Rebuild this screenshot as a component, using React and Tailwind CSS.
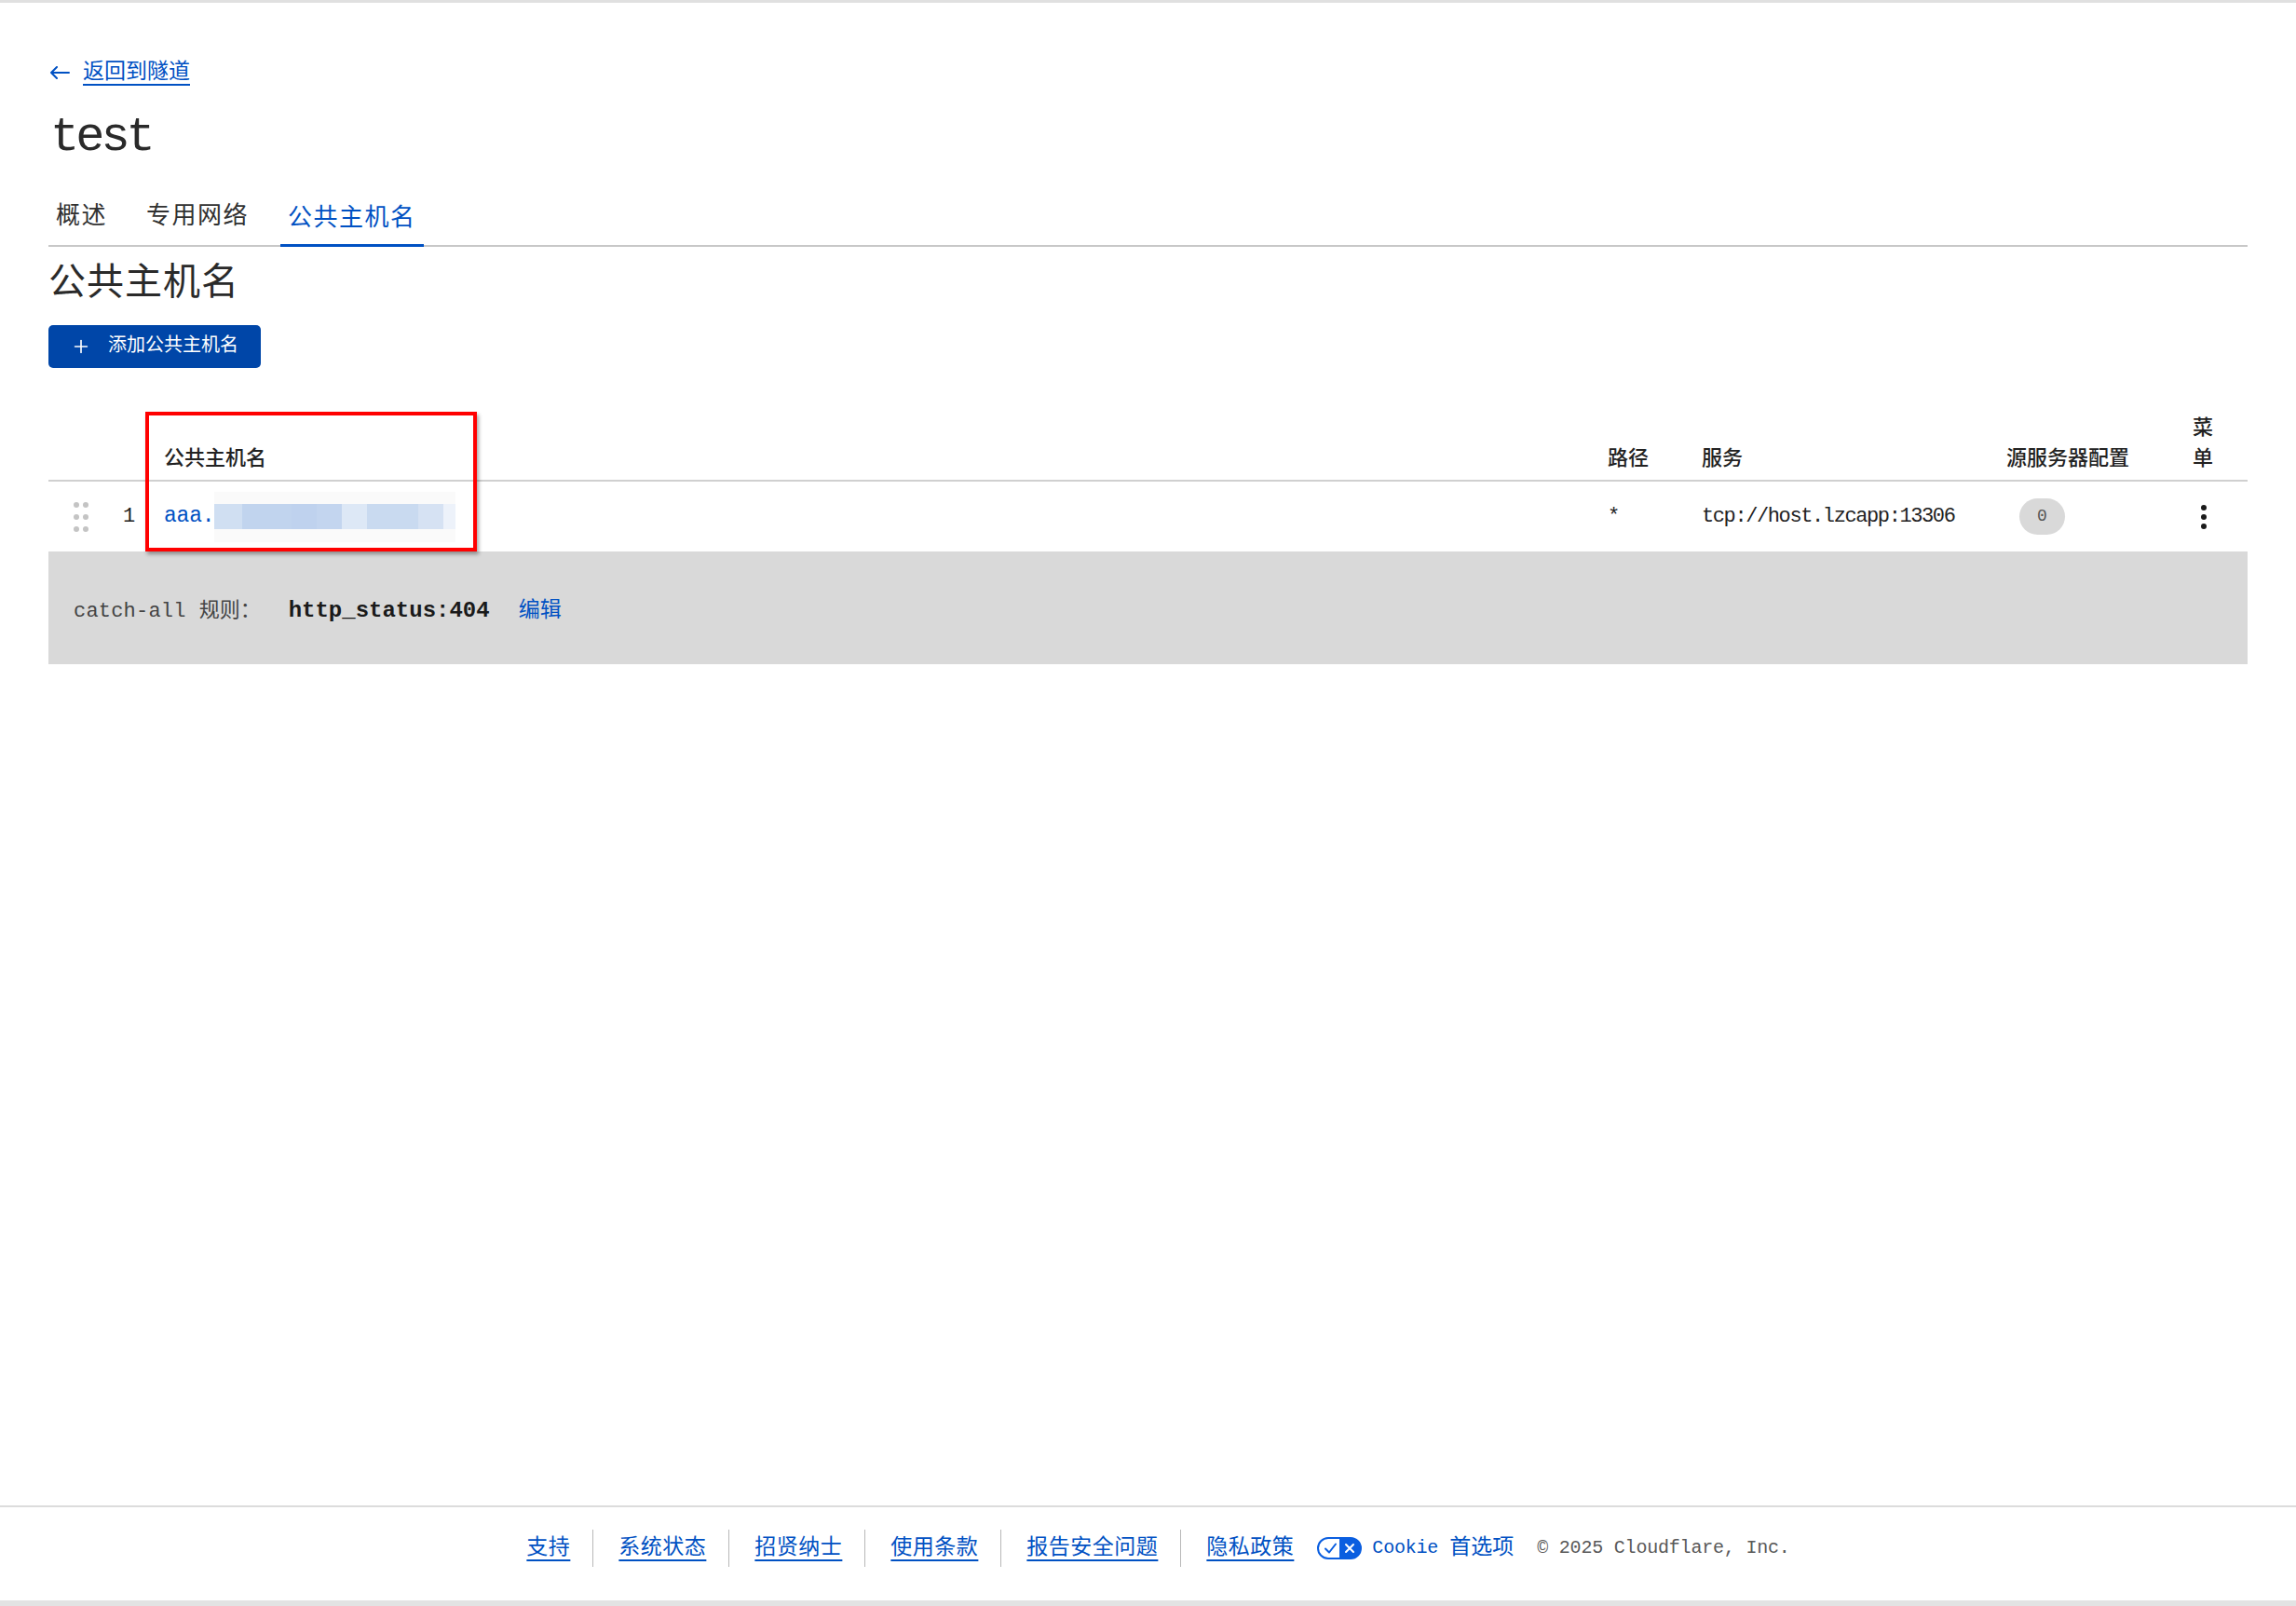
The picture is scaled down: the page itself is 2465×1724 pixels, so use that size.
import { Plus } from 'lucide-react';

const blurSegments = [
  { w: 30, c: 'bg-[#d0dff2]' },
  { w: 53, c: 'bg-[#c1d4ee]' },
  { w: 27, c: 'bg-[#bfd2ee]' },
  { w: 27, c: 'bg-[#c3d5ef]' },
  { w: 27, c: 'bg-[#dde8f6]' },
  { w: 55, c: 'bg-[#c9daf0]' },
  { w: 27, c: 'bg-[#d6e2f3]' },
  { w: 13, c: 'bg-[#edf2fa]' },
];

const footerLinks = ['支持', '系统状态', '招贤纳士', '使用条款', '报告安全问题'];

function DragHandle() {
  return (
    <div className="grid grid-cols-2 gap-x-[4px] gap-y-[7px] w-[16px]">
      {[0, 1, 2, 3, 4, 5].map((i) => (
        <span key={i} className="block w-[6px] h-[6px] rounded-full bg-[#c4c4c4]" />
      ))}
    </div>
  );
}

function Kebab() {
  return (
    <div className="flex flex-col items-center gap-[4px] w-[24px]">
      <span className="block w-[6px] h-[6px] rounded-full bg-[#1a1a1a]" />
      <span className="block w-[6px] h-[6px] rounded-full bg-[#1a1a1a]" />
      <span className="block w-[6px] h-[6px] rounded-full bg-[#1a1a1a]" />
    </div>
  );
}

function CookieToggle() {
  return (
    <svg width="48" height="24" viewBox="0 0 48 24" fill="none">
      <rect x="1" y="1" width="46" height="22" rx="11" fill="#fff" stroke="#0a5ee0" strokeWidth="2" />
      <path d="M24 1h12a11 11 0 0 1 0 22H24z" fill="#0a5ee0" />
      <path d="M9 12.5l4 4 7-9" stroke="#0a5ee0" strokeWidth="2" strokeLinecap="round" strokeLinejoin="round" />
      <path d="M31 8l8 8M39 8l-8 8" stroke="#fff" strokeWidth="2" strokeLinecap="round" />
    </svg>
  );
}

export default function App() {
  return (
    <div className="min-h-[1724px] flex flex-col bg-white text-[#313131] font-['Liberation_Mono','Noto_Sans_CJK_SC',monospace]">
      <div className="h-[3px] bg-[#e0e0e0]" />

      <main className="flex-1 px-[52px]">
        {/* back link */}
        <div className="mt-[60px] leading-[30px]">
          <a href="#" className="inline-flex items-center gap-[14px] text-[#0051c3] underline underline-offset-[6px] decoration-[1.5px]">
            <svg width="22" height="14" viewBox="0 0 22 14" fill="none" className="ml-[1px]">
              <path d="M21 7H2M8 1L2 7l6 6" stroke="#0051c3" strokeWidth="2" strokeLinecap="round" strokeLinejoin="round" />
            </svg>
            <span className="text-[23px]">返回到隧道</span>
          </a>
        </div>

        <h1 className="mt-[22px] text-[52px] leading-[60px] tracking-[-4px] text-[#2a2a2a] pl-[2px]">test</h1>

        {/* tabs */}
        <div className="mt-[37px] flex items-end gap-[26px] border-b-2 border-[#c8c8c8] text-[26px] leading-[36px] tracking-[1.5px]">
          <div className="px-[8px] pb-[12px] text-[#313131]">概述</div>
          <div className="px-[8px] pb-[12px] text-[#313131]">专用网络</div>
          <div className="px-[8px] pb-[9px] -mb-[2px] border-b-[3px] border-[#0051c3] text-[#0051c3]">公共主机名</div>
        </div>

        <h2 className="mt-[17px] text-[40px] leading-[48px] tracking-[1px] text-[#2a2a2a]">公共主机名</h2>

        <button className="mt-[19px] h-[46px] w-[228px] flex items-center gap-[18px] pl-[24px] rounded-[5px] bg-[#0046a8] text-white">
          <Plus size={22} strokeWidth={1.8} />
          <span className="text-[20px]">添加公共主机名</span>
        </button>

        {/* table */}
        <div className="relative mt-[49px]">
          <div className="grid grid-cols-[64px_48px_1fr_101px_327px_200px_71px] items-end border-b-2 border-[#d0d0d0] text-[22px] leading-[33px] font-medium text-[#222]">
            <div />
            <div />
            <div className="pl-[12px] pb-[5px]">公共主机名</div>
            <div className="pl-[12px] pb-[5px]">路径</div>
            <div className="pl-[12px] pb-[5px]">服务</div>
            <div className="pl-[12px] pb-[5px]">源服务器配置</div>
            <div className="pl-[12px] pb-[5px] w-[36px] break-all">菜单</div>
          </div>

          <div className="grid grid-cols-[64px_48px_1fr_101px_327px_200px_71px] items-center h-[75px] text-[22px]">
            <div className="pl-[27px]">
              <DragHandle />
            </div>
            <div className="pl-[16px] text-[#222]">1</div>
            <div className="pl-[12px] flex items-center">
              <span className="text-[23px] text-[#0051c3] tracking-[-0.2px]">aaa.</span>
              <div className="h-[54px] w-[259px] bg-[#fafafa] flex items-center">
                {blurSegments.map((s, i) => (
                  <span key={i} className={`block h-[27px] ${s.c}`} style={{ width: s.w }} />
                ))}
              </div>
            </div>
            <div className="pl-[12px] text-[#222]">*</div>
            <div className="pl-[12px] text-[#222] tracking-[-1.4px] whitespace-nowrap">tcp://host.lzcapp:13306</div>
            <div className="pl-[26px]">
              <span className="flex items-center justify-center w-[49px] h-[39px] rounded-full bg-[#d9d9d9] text-[18px] text-[#555]">0</span>
            </div>
            <div className="pl-[12px]">
              <Kebab />
            </div>
          </div>

          <div className="h-[121px] bg-[#d9d9d9] flex items-center pl-[27px] pt-[7px]">
            <span className="text-[22px] text-[#444] tracking-[0.2px]">catch-all</span>
            <span className="ml-[14px] text-[22px] text-[#444]">规则：</span>
            <span className="ml-[30px] text-[24px] font-bold text-[#1a1a1a]">http_status:404</span>
            <a href="#" className="ml-[31px] text-[23px] text-[#0051c3]">编辑</a>
          </div>

          {/* annotation */}
          <div className="absolute left-[104px] -top-[2px] w-[356px] h-[150px] border-[4px] border-[#ff0000] shadow-[2px_3px_4px_rgba(0,0,0,0.35)] pointer-events-none" />
        </div>
      </main>

      <footer className="h-[102px] border-t-2 border-[#dcdcdc] flex items-center justify-center pb-[12px] pl-[22px] text-[23px]">
        {footerLinks.map((l) => (
          <div key={l} className="flex items-center">
            <a href="#" className="text-[#0051c3] tracking-[0.5px] underline underline-offset-[6px] decoration-[1.5px]">{l}</a>
            <span className="ml-[24px] mr-[27px] block w-[1px] h-[40px] bg-[#b8b8b8]" />
          </div>
        ))}
        <a href="#" className="text-[#0051c3] tracking-[0.5px] underline underline-offset-[6px] decoration-[1.5px]">隐私政策</a>
        <span className="ml-[25px]">
          <CookieToggle />
        </span>
        <span className="ml-[11px] text-[#0051c3] flex items-center gap-[12px]">
          <span className="text-[20px] tracking-[-0.2px]">Cookie</span>
          <span>首选项</span>
        </span>
        <span className="ml-[25px] text-[20px] text-[#595959] tracking-[-0.2px]">© 2025 Cloudflare, Inc.</span>
      </footer>
      <div className="h-[6px] bg-[#e3e3e3]" />
    </div>
  );
}
